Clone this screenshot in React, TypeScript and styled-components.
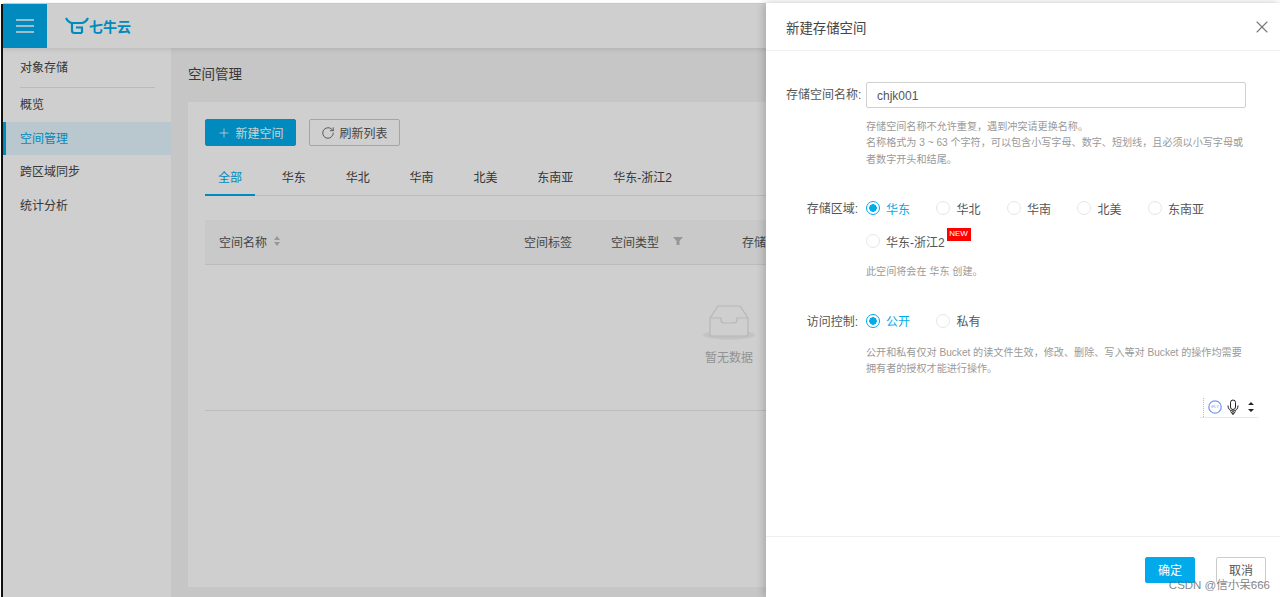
import styled, { createGlobalStyle } from "styled-components";
import { Plus, RotateCw, X } from "lucide-react";

const blue = "#00aaeb";
const font = `"Liberation Sans", "Noto Sans CJK SC", sans-serif`;

const GlobalStyle = createGlobalStyle`
  html, body { margin: 0; padding: 0; height: 100%; overflow: hidden; background: #fff; }
  body { font-family: ${font}; font-size: 12px; color: #444; }
  * { box-sizing: border-box; }
`;

const Screen = styled.div`
  position: relative;
  height: 597px;
  width: 1280px;
  overflow: hidden;
  padding-top: 4px;
  padding-left: 1px;
  display: flex;
`;

const Frame = styled.div`
  flex: 1;
  min-width: 0;
  display: flex;
  flex-direction: column;
  border-left: 2px solid #111;
`;

const Overlay = styled.div`
  position: absolute;
  left: 3px;
  right: 0;
  top: 3px;
  bottom: 0;
  background: rgba(0, 0, 0, 0.19);
`;

const Header = styled.header`
  height: 44px;
  flex: none;
  display: flex;
  align-items: center;
  background: #fff;
  box-shadow: 0 1px 5px rgba(0, 0, 0, 0.12);
  position: relative;
`;

const Burger = styled.div`
  width: 44px;
  height: 44px;
  background: ${blue};
  display: flex;
  align-items: center;
  justify-content: center;
`;

const Logo = styled.div`
  margin-left: 18px;
  display: flex;
  align-items: center;
  gap: 0;
  color: ${blue};
  font-size: 14px;
  font-weight: 700;
`;

const Body = styled.div`
  flex: 1;
  min-height: 0;
  display: flex;
`;

const Sidebar = styled.nav`
  width: 168px;
  flex: none;
  background: #fff;
`;

const SideTitle = styled.div`
  margin: 0 16px 0 17px;
  height: 40px;
  padding-top: 10px;
  line-height: 20px;
  color: #444;
  border-bottom: 1px solid #e6e6e6;
`;

const SideItem = styled.div<{ $active?: boolean }>`
  height: 33.5px;
  line-height: 35px;
  padding-left: ${(p) => (p.$active ? 14 : 17)}px;
  color: ${(p) => (p.$active ? blue : "#444")};
  background: ${(p) => (p.$active ? "#e4f7ff" : "transparent")};
  border-left: ${(p) => (p.$active ? `3px solid ${blue}` : "none")};
`;

const Main = styled.main`
  flex: 1;
  min-width: 0;
  display: flex;
  flex-direction: column;
  background: #f4f4f4;
  padding: 17px 10px 10px 17px;
`;

const PageTitle = styled.h1`
  margin: 0 0 17px;
  font-size: 13.5px;
  line-height: 20px;
  font-weight: 400;
  color: #444;
`;

const Card = styled.section`
  flex: 1;
  background: #fff;
  padding: 17px;
`;

const Toolbar = styled.div`
  display: flex;
  gap: 13px;
`;

const ToolButton = styled.button`
  width: 91px;
  height: 27px;
  padding: 0;
  display: flex;
  align-items: center;
  justify-content: center;
  gap: 4px;
  font-family: ${font};
  font-size: 12px;
  border-radius: 2px;
  color: #555;
  background: #fff;
  border: 1px solid #ccc;
`;

const PrimaryToolButton = styled(ToolButton)`
  color: #fff;
  background: ${blue};
  border-color: ${blue};
`;

const Tabs = styled.div`
  margin-top: 12px;
  height: 38px;
  display: flex;
  border-bottom: 1px solid #e8e8e8;
`;

const Tab = styled.div<{ $active?: boolean }>`
  height: 38px;
  padding: 0 13px;
  margin-right: 13.85px;
  line-height: 41px;
  color: ${(p) => (p.$active ? blue : "#444")};
  border-bottom: 2px solid ${(p) => (p.$active ? blue : "transparent")};
`;

const TableHead = styled.div`
  margin-top: 24px;
  height: 45px;
  padding-bottom: 2px;
  display: grid;
  grid-template-columns: 305px 87px 131px 1fr;
  align-items: center;
  background: #f8f8f8;
  border-bottom: 1px solid #e8e8e8;
  color: #555;
`;

const HeadCell = styled.div`
  padding-left: 14px;
  display: flex;
  align-items: center;
`;

const Empty = styled.div`
  height: 146px;
  display: flex;
  flex-direction: column;
  align-items: center;
  padding-top: 39px;
  border-bottom: 1px solid #e8e8e8;
  color: #b5b5b5;
`;

const EmptyText = styled.div`
  margin-top: 9px;
  line-height: 18px;
`;

const Drawer = styled.aside`
  position: absolute;
  top: 3px;
  right: 0;
  bottom: 0;
  width: 514px;
  display: flex;
  flex-direction: column;
  background: #fff;
  box-shadow: -2px 0 8px rgba(0, 0, 0, 0.2);
`;

const DrawerHead = styled.div`
  height: 48px;
  flex: none;
  padding: 0 8px 0 20px;
  display: flex;
  align-items: center;
  justify-content: space-between;
  border-bottom: 1px solid #f0f0f0;
  font-size: 13.4px;
  color: #444;
`;

const DrawerBody = styled.div`
  flex: 1;
  padding: 31px 20px 0;
`;

const FormRow = styled.div<{ $gap?: number }>`
  display: grid;
  grid-template-columns: 76px 380px;
  column-gap: 4px;
  margin-top: ${(p) => p.$gap ?? 0}px;
`;

const Label = styled.div<{ $inset?: number }>`
  text-align: right;
  line-height: 26px;
  padding-right: ${(p) => p.$inset ?? 0}px;
  color: #555;
  white-space: nowrap;
`;

const NameInput = styled.input`
  width: 380px;
  height: 26px;
  padding: 2px 10px 0;
  font-family: ${font};
  font-size: 12px;
  color: #555;
  border: 1px solid #d0d0d0;
  border-radius: 2px;
  outline: none;
`;

const Hint = styled.div<{ $top: number }>`
  grid-column: 2;
  margin-top: ${(p) => p.$top}px;
  font-size: 10.1px;
  line-height: 16.5px;
  color: #999;
`;

const RadioGroup = styled.div`
  display: flex;
  flex-wrap: wrap;
  row-gap: 9px;
  margin-left: -0.5px;
`;

const RadioItem = styled.div<{ $checked?: boolean }>`
  min-width: 70.5px;
  height: 24px;
  display: flex;
  align-items: center;
  gap: 6.5px;
  padding-right: 20px;
  color: ${(p) => (p.$checked ? blue : "#555")};
  position: relative;
`;

const RadioDot = styled.span<{ $checked?: boolean }>`
  width: 14px;
  height: 14px;
  flex: none;
  border-radius: 50%;
  border: 1px solid ${(p) => (p.$checked ? blue : "#e6e6e6")};
  background: ${(p) => (p.$checked ? `radial-gradient(circle, ${blue} 0 3.5px, #fff 4px)` : "#fff")};
`;

const NewBadge = styled.span`
  position: absolute;
  left: 81px;
  top: -1px;
  width: 24px;
  height: 13px;
  line-height: 12px;
  text-align: center;
  background: #f00;
  color: #fff;
  font-size: 8px;
`;

const VoiceBar = styled.div`
  margin: 20px 2px 0 auto;
  width: 58px;
  height: 20px;
  display: flex;
  align-items: center;
  gap: 5px;
  padding-left: 8px;
  border-bottom: 1px solid #e8e8e8;
  position: relative;
  &::before {
    content: "";
    position: absolute;
    left: 3px;
    top: 0;
    bottom: 0;
    border-left: 1px dotted #bbb;
  }
`;

const DrawerFoot = styled.div`
  height: 61px;
  flex: none;
  padding: 20px 14px 0 0;
  display: flex;
  justify-content: flex-end;
  gap: 21px;
  border-top: 1px solid #eee;
`;

const FootButton = styled.button<{ $primary?: boolean }>`
  width: 50px;
  height: 26px;
  padding: 0 0 2px;
  font-family: ${font};
  font-size: 12px;
  border-radius: 2px;
  color: ${(p) => (p.$primary ? "#fff" : "#555")};
  background: ${(p) => (p.$primary ? blue : "#fff")};
  border: 1px solid ${(p) => (p.$primary ? blue : "#ccc")};
`;

const Watermark = styled.div`
  position: absolute;
  right: 10px;
  bottom: 5px;
  font-size: 11.5px;
  line-height: 14px;
  color: rgba(110, 110, 110, 0.85);
`;

const regions = ["华东", "华北", "华南", "北美", "东南亚"];
const tabs = ["全部", "华东", "华北", "华南", "北美", "东南亚", "华东-浙江2"];

const App = () => {
  return (
    <Screen>
      <GlobalStyle />
      <Frame>
        <Header>
          <Burger>
            <svg width="18" height="16" viewBox="0 0 18 16">
              <path d="M0 2h18M0 8h18M0 14h18" stroke="#fff" strokeWidth="1.6" />
            </svg>
          </Burger>
          <Logo>
            <svg width="24" height="18" viewBox="0 0 24 18" fill="none" stroke={blue} strokeWidth="2.2">
              <path d="M1 1c1.500 3 3.500 4.500 6 5h10c2.500-.5 4.500-2 6-5" />
              <path d="M7 6v7.500c0 1.500.8 2.500 2.300 2.500H17M11 10.500h6V16" />
            </svg>
            <span>七牛云</span>
          </Logo>
        </Header>
        <Body>
          <Sidebar>
            <SideTitle>对象存储</SideTitle>
            <SideItem>概览</SideItem>
            <SideItem $active>空间管理</SideItem>
            <SideItem>跨区域同步</SideItem>
            <SideItem>统计分析</SideItem>
          </Sidebar>
          <Main>
            <PageTitle>空间管理</PageTitle>
            <Card>
              <Toolbar>
                <PrimaryToolButton>
                  <Plus size={14} strokeWidth={1.4} />
                  新建空间
                </PrimaryToolButton>
                <ToolButton>
                  <RotateCw size={14} strokeWidth={1.4} />
                  刷新列表
                </ToolButton>
              </Toolbar>
              <Tabs>
                {tabs.map((t, i) => (
                  <Tab key={t} $active={i === 0}>
                    {t}
                  </Tab>
                ))}
              </Tabs>
              <TableHead>
                <HeadCell>
                  空间名称
                  <svg width="8" height="12" viewBox="0 0 8 12" style={{ marginLeft: 6 }}>
                    <path d="M4 1l3 4H1zM4 11L1 7h6z" fill="#bbb" />
                  </svg>
                </HeadCell>
                <HeadCell>空间标签</HeadCell>
                <HeadCell>
                  空间类型
                  <svg width="10" height="10" viewBox="0 0 10 10" style={{ marginLeft: 14 }}>
                    <path d="M0 1h10L6.500 5v4h-3V5z" fill="#bbb" />
                  </svg>
                </HeadCell>
                <HeadCell>存储区域</HeadCell>
              </TableHead>
              <Empty>
                <svg width="56" height="36" viewBox="0 0 56 36" fill="none">
                  <ellipse cx="28" cy="31" rx="26" ry="4.500" fill="#f1f1f1" />
                  <path
                    d="M9 14L17 2h22l8 12v16a2 2 0 0 1-2 2H11a2 2 0 0 1-2-2z"
                    fill="#fff"
                    stroke="#e2e2e2"
                    strokeWidth="1.2"
                  />
                  <path d="M9 14h11v2a3 3 0 0 0 3 3h10a3 3 0 0 0 3-3v-2h11" stroke="#e2e2e2" strokeWidth="1.2" />
                </svg>
                <EmptyText>暂无数据</EmptyText>
              </Empty>
            </Card>
          </Main>
        </Body>
      </Frame>
      <Overlay />
      <Drawer>
        <DrawerHead>
          新建存储空间
          <X size={20} strokeWidth={1.3} color="#777" />
        </DrawerHead>
        <DrawerBody>
          <FormRow>
            <Label $inset={1}>存储空间名称:</Label>
            <NameInput defaultValue="chjk001" />
            <Hint $top={10.5}>
              存储空间名称不允许重复，遇到冲突请更换名称。
              <br />
              名称格式为 3 ~ 63 个字符，可以包含小写字母、数字、短划线，且必须以小写字母或者数字开头和结尾。
            </Hint>
          </FormRow>
          <FormRow $gap={28}>
            <Label $inset={4}>存储区域:</Label>
            <RadioGroup>
              {regions.map((r, i) => (
                <RadioItem key={r} $checked={i === 0}>
                  <RadioDot $checked={i === 0} />
                  {r}
                </RadioItem>
              ))}
              <RadioItem>
                <RadioDot />
                华东-浙江2
                <NewBadge>NEW</NewBadge>
              </RadioItem>
            </RadioGroup>
            <Hint $top={11}>此空间将会在 华东 创建。</Hint>
          </FormRow>
          <FormRow $gap={28}>
            <Label $inset={4}>访问控制:</Label>
            <RadioGroup>
              <RadioItem $checked>
                <RadioDot $checked />
                公开
              </RadioItem>
              <RadioItem>
                <RadioDot />
                私有
              </RadioItem>
            </RadioGroup>
            <Hint $top={10}>
              公开和私有仅对 Bucket 的读文件生效，修改、删除、写入等对 Bucket 的操作均需要拥有者的授权才能进行操作。
            </Hint>
          </FormRow>
          <VoiceBar>
            <svg width="14" height="14" viewBox="0 0 14 14">
              <circle cx="7" cy="7" r="6.200" fill="#fff" stroke="#7c9bf0" strokeWidth="1.3" />
              <text x="7" y="8.400" textAnchor="middle" fontSize="4" fill="#7c9bf0" fontFamily="Liberation Sans">
                iFLY
              </text>
            </svg>
            <svg width="12" height="17" viewBox="0 0 12 17" fill="none" stroke="#222" strokeWidth="1">
              <rect x="3.500" y="1" width="5" height="9.500" rx="2.500" />
              <path d="M1 6.500c0 3.500 2 5.500 5 5.500s5-2 5-5.500M6 12v3.500M3.500 12.500L6 15.500l2.500-3" />
            </svg>
            <svg width="8" height="12" viewBox="0 0 8 12" style={{ marginLeft: 3 }}>
              <path d="M1 4h6L4 1zM1 8h6l-3 3z" fill="#222" />
            </svg>
          </VoiceBar>
        </DrawerBody>
        <DrawerFoot>
          <FootButton $primary>确定</FootButton>
          <FootButton>取消</FootButton>
        </DrawerFoot>
      </Drawer>
      <Watermark>CSDN @信小呆666</Watermark>
    </Screen>
  );
};

export default App;
